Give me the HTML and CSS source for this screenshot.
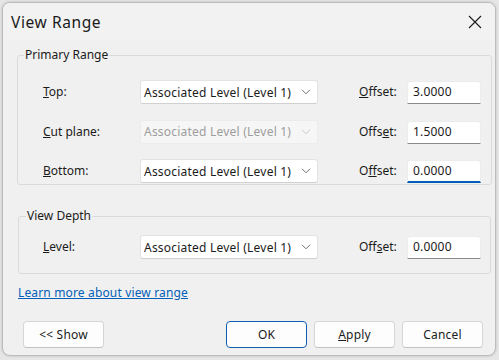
FILE: index.html
```html
<!DOCTYPE html>
<html>
<head>
<meta charset="utf-8">
<link rel="stylesheet" href="styles.css">
</head>
<body>
<div class="dialog">
  <div class="titlebar">
    <span class="title">View Range</span>
    <svg class="close" width="14" height="14" viewBox="0 0 14 14"><path d="M1 1 L13 13 M13 1 L1 13" stroke="#1a1a1a" stroke-width="1.1" fill="none"/></svg>
  </div>
  <div class="content">
    <fieldset class="group primary">
      <legend>Primary Range</legend>
      <div class="grid">
        <label class="lbl"><u>T</u>op:</label>
        <div class="combo"><span>Associated Level (Level 1)</span><svg class="chev" width="10" height="6" viewBox="0 0 10 6"><path d="M1 0.8 L5 4.8 L9 0.8" stroke="#707070" stroke-width="1" fill="none"/></svg></div>
        <label class="olbl"><u>O</u>ffset:</label>
        <div class="input">3.0000</div>

        <label class="lbl"><u>C</u>ut plane:</label>
        <div class="combo disabled"><span>Associated Level (Level 1)</span><svg class="chev" width="10" height="6" viewBox="0 0 10 6"><path d="M1 0.8 L5 4.8 L9 0.8" stroke="#c8c8c8" stroke-width="1" fill="none"/></svg></div>
        <label class="olbl">Offs<u>e</u>t:</label>
        <div class="input">1.5000</div>

        <label class="lbl"><u>B</u>ottom:</label>
        <div class="combo"><span>Associated Level (Level 1)</span><svg class="chev" width="10" height="6" viewBox="0 0 10 6"><path d="M1 0.8 L5 4.8 L9 0.8" stroke="#707070" stroke-width="1" fill="none"/></svg></div>
        <label class="olbl">O<u>f</u>fset:</label>
        <div class="input focused">0.0000</div>
      </div>
    </fieldset>

    <fieldset class="group depth">
      <legend>View Depth</legend>
      <div class="grid">
        <label class="lbl"><u>L</u>evel:</label>
        <div class="combo"><span>Associated Level (Level 1)</span><svg class="chev" width="10" height="6" viewBox="0 0 10 6"><path d="M1 0.8 L5 4.8 L9 0.8" stroke="#707070" stroke-width="1" fill="none"/></svg></div>
        <label class="olbl">Off<u>s</u>et:</label>
        <div class="input">0.0000</div>
      </div>
    </fieldset>

    <a class="link" href="#">Learn more about view range</a>

    <div class="buttons">
      <button class="btn">&lt;&lt; Show</button>
      <div class="spacer"></div>
      <button class="btn default">OK</button>
      <button class="btn"><u>A</u>pply</button>
      <button class="btn">Cancel</button>
    </div>
  </div>
</div>
</body>
</html>
```

FILE: styles.css
```css
* { box-sizing: border-box; }
body {
  margin: 0;
  background: #e6e6e6;
  font-family: "Segoe UI", "Noto Sans", "Open Sans", sans-serif;
  font-size: 12px;
  color: #1b1b1b;
}
.dialog {
  margin: 2px;
  width: 494px;
  height: 354px;
  border: 1px solid #bcbcbc;
  border-radius: 8px;
  background: #f0f0f0;
  box-shadow: 0 0 3px rgba(0,0,0,0.18);
  display: flex;
  flex-direction: column;
  overflow: hidden;
}
.titlebar {
  height: 37px;
  flex: none;
  display: flex;
  align-items: center;
  justify-content: space-between;
  padding-left: 8px;
  padding-right: 13px;
  background: #f2f2f2;
}
.title { font-size: 15.5px; letter-spacing: 0.6px; line-height: 20px; color: #1a1a1a; }
.close { display: block; }
.content {
  padding: 7px 4px 0 14px;
  display: flex;
  flex-direction: column;
}
.group {
  margin: 0;
  padding: 0;
  border: 1px solid #dadada;
  border-radius: 3px;
  min-width: 0;
}
.group legend {
  font-size: 12px;
  line-height: 16px;
  padding: 0 1px;
}
.primary { width: 475px; }
.primary legend { margin-left: 6px; }
.depth { width: 473px; margin-left: 1px; margin-top: 23px; }
.depth legend { margin-left: 7px; }
.grid {
  display: grid;
  grid-template-columns: 97px 178px 41px 48px 74px;
  grid-auto-rows: 24px;
  row-gap: 15.5px;
  align-items: center;
}
.grid .olbl { grid-column: 4; }
.primary .grid { padding: 17px 0 1px 25px; }
.depth .grid { padding: 11px 0 14px 24px; }
.lbl, .olbl { line-height: 16px; }
.combo {
  grid-column: 2;
  height: 24px;
  background: #fff;
  border: 1px solid #e3e3e3;
  border-bottom-color: #d0d0d0;
  border-radius: 3px;
  display: flex;
  align-items: center;
  justify-content: space-between;
  padding: 0 6px 0 3px;
  letter-spacing: 0.22px;
}
.combo.disabled {
  background: #f6f6f6;
  border-color: #ececec;
  color: #9d9d9d;
}
.chev { display: block; }
.input {
  grid-column: 5;
  height: 23px;
  align-self: end;
  background: #fff;
  border: 1px solid #ececec;
  border-bottom: 1px solid #8a8a8a;
  border-radius: 3px 3px 0 0;
  padding: 0 5px;
  line-height: 20px;
  letter-spacing: 0.2px;
}
.input.focused {
  border-bottom: 2px solid #005fb8;
}
.link {
  margin-top: 11px;
  margin-left: 1px;
  align-self: flex-start;
  color: #005fb8;
  line-height: 16px;
  text-decoration: underline;
  letter-spacing: 0.15px;
}
.buttons {
  margin-top: 20px;
  display: flex;
  gap: 7px;
  padding-left: 6px;
  padding-right: 8px;
}
.spacer { flex: 1; }
.btn {
  width: 81px;
  height: 27px;
  background: #fdfdfd;
  border: 1px solid #d6d6d6;
  border-bottom-color: #c2c2c2;
  border-radius: 4px;
  font-family: inherit;
  font-size: 12px;
  color: #1b1b1b;
  padding: 0;
  letter-spacing: 0.2px;
}
.btn.default { border-color: #0f5fae; }
```
